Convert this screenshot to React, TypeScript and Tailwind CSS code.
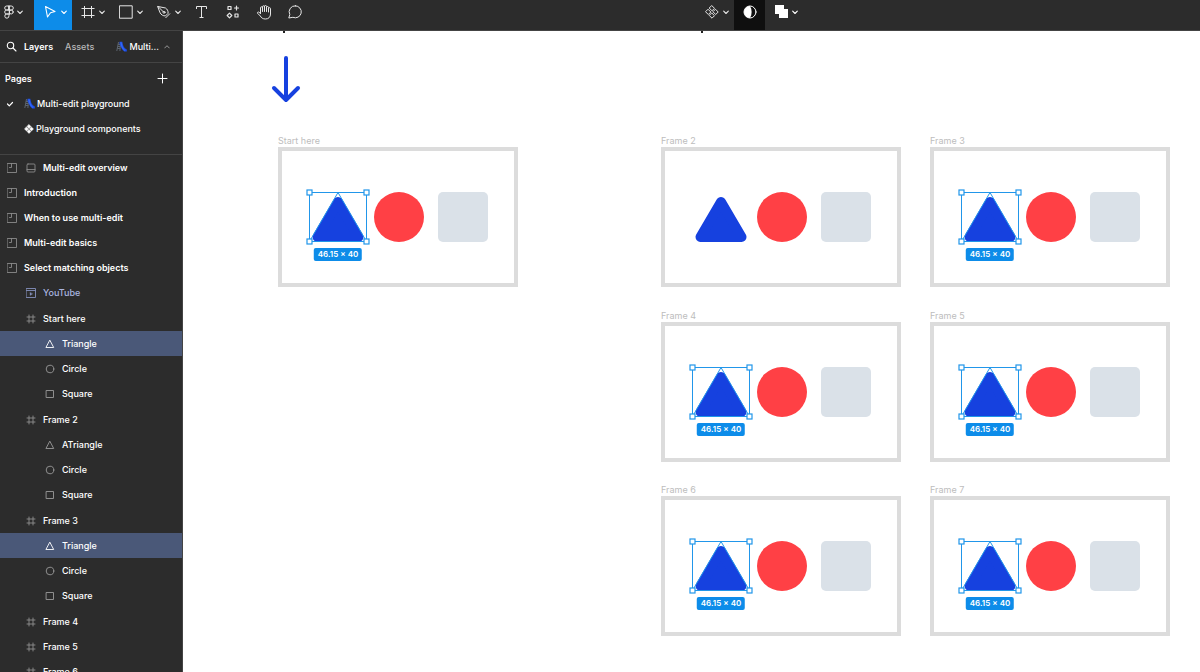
import type { ReactNode } from "react";

type IconProps = { className?: string };

function Icon({ size = 14, className = "", children }: IconProps & { size?: number; children: ReactNode }) {
  return (
    <svg
      width={size}
      height={size}
      viewBox={`0 0 ${size} ${size}`}
      fill="none"
      stroke="currentColor"
      strokeLinecap="round"
      strokeLinejoin="round"
      aria-hidden="true"
      className={`shrink-0 ${className}`}
    >
      {children}
    </svg>
  );
}

function Chevron() {
  return (
    <Icon size={6}>
      <path d="M.7 2.200L3 4.500l2.300-2.300" strokeWidth="1.100" />
    </Icon>
  );
}

function Slide() {
  return (
    <svg width="11" height="11" viewBox="0 0 11 11" fill="none" aria-hidden="true" className="shrink-0">
      <path d="M2.500 1L.8 10M4.500 1l-.6 9M2 3.500h3M1.700 5.500h3M1.300 7.500h3" stroke="#5c646e" strokeWidth="1" />
      <path d="M3.500 .8h2.800c.5 3.700 1.400 6.400 4.500 7.700v2H8.300C5.800 9 5 6 3.500 3z" fill="#1d4fe8" />
      <path d="M5 1.500c.5 3.500 1.600 6.700 4 8" stroke="#5b8cff" strokeWidth=".5" />
    </svg>
  );
}

function SectionIcon() {
  return (
    <Icon size={10} className="text-[#8a8a8a]">
      <path d="M.5.5h9v9h-9zM2.500 4.500h2v-4" strokeWidth=".9" />
    </Icon>
  );
}

function FrameIcon() {
  return (
    <Icon size={10} className="text-[#8f8f8f]">
      <path d="M3 1v8M7 1v8M1 3h8M1 7h8" strokeWidth=".9" />
    </Icon>
  );
}

function ComponentIcon() {
  return (
    <Icon size={10} className="text-[#8a8a8a]">
      <rect x="1" y="1" width="8" height="8" rx="1" strokeWidth=".9" />
      <path d="M1 6.500h8" strokeWidth=".9" />
    </Icon>
  );
}

function VideoIcon() {
  return (
    <Icon size={10} className="text-[#8591bd]">
      <path d="M.5.5h9v9h-9zM.5 2.500h9" strokeWidth=".9" />
      <path d="M4 4.500v3L6.500 6z" fill="currentColor" strokeWidth=".3" />
    </Icon>
  );
}

function ShapeIcon({ shape, active }: { shape: string; active?: boolean }) {
  return (
    <Icon size={10} className={active ? "text-white" : "text-[#9a9a9a]"}>
      {shape === "triangle" && <path d="M5 1.500L8.700 8.500H1.300z" strokeWidth=".9" />}
      {shape === "circle" && <circle cx="5" cy="5" r="3.800" strokeWidth=".9" />}
      {shape === "square" && <path d="M1.500 1.500h7v7h-7z" strokeWidth=".9" />}
    </Icon>
  );
}

const layerGroups = [
  [
    { name: "Multi-edit overview", kind: "overview" },
    { name: "Introduction", kind: "section" },
    { name: "When to use multi-edit", kind: "section" },
    { name: "Multi-edit basics", kind: "section" },
    { name: "Select matching objects", kind: "section" },
    { name: "YouTube", kind: "video" },
  ],
  [
    { name: "Start here", kind: "frame" },
    { name: "Triangle", kind: "triangle", active: true },
    { name: "Circle", kind: "circle" },
    { name: "Square", kind: "square" },
  ],
  [
    { name: "Frame 2", kind: "frame" },
    { name: "ATriangle", kind: "triangle" },
    { name: "Circle", kind: "circle" },
    { name: "Square", kind: "square" },
  ],
  [
    { name: "Frame 3", kind: "frame" },
    { name: "Triangle", kind: "triangle", active: true },
    { name: "Circle", kind: "circle" },
    { name: "Square", kind: "square" },
  ],
  [
    { name: "Frame 4", kind: "frame" },
    { name: "Frame 5", kind: "frame" },
    { name: "Frame 6", kind: "frame" },
  ],
];

const rowStyles: Record<string, string> = {
  overview: "pl-[7px] font-semibold",
  section: "pl-[7px] font-semibold",
  video: "pl-[26px] font-medium text-[#aab6e0]",
  frame: "pl-[26px] font-medium",
  triangle: "pl-[45px] font-medium",
  circle: "pl-[45px] font-medium",
  square: "pl-[45px] font-medium",
};

function LayerRow({ name, kind, active }: { name: string; kind: string; active?: boolean }) {
  return (
    <li>
      <button
        className={`flex h-[25px] w-full items-center gap-[7px] text-left ${rowStyles[kind]} ${active ? "bg-[#4a5878]" : ""}`}
      >
        {kind === "overview" && (
          <span className="flex gap-[9px]">
            <SectionIcon />
            <ComponentIcon />
          </span>
        )}
        {kind === "section" && <SectionIcon />}
        {kind === "video" && <VideoIcon />}
        {kind === "frame" && <FrameIcon />}
        {["triangle", "circle", "square"].includes(kind) && <ShapeIcon shape={kind} active={active} />}
        {name}
      </button>
    </li>
  );
}

function Tool({ label, menu, className = "", children }: { label: string; menu?: boolean; className?: string; children: ReactNode }) {
  return (
    <button
      aria-label={label}
      className={`flex shrink-0 items-center pb-1.5 ${menu ? "w-[38px] gap-1 pl-[9px]" : "w-[31px] justify-center"} ${className}`}
    >
      {children}
      {menu && <Chevron />}
    </button>
  );
}

function Toolbar() {
  return (
    <header className="flex h-[31px] overflow-hidden border-b border-[#444] bg-[#2c2c2c] text-[#e6e6e6]">
      <button aria-label="Main menu" className="flex w-[34px] shrink-0 items-center gap-[1px] pb-1.5 pl-[2px]">
        <Icon>
          <path d="M7 1H4.700a2 2 0 000 4H7zM7 1h2.300a2 2 0 010 4H7zM7 5H4.700a2 2 0 000 4H7zM7 9H4.700A2.100 2.100 0 107 11z" />
          <circle cx="9.200" cy="7" r="2" />
        </Icon>
        <Chevron />
      </button>
      <Tool label="Move" menu className="bg-[#0d8ce9] text-white">
        <Icon>
          <path d="M2.500 1.500l9.500 5-4.500 1.300L4.500 12z" strokeWidth="1.100" />
        </Icon>
      </Tool>
      <Tool label="Frame" menu>
        <Icon>
          <path d="M3.500 1v12M10.500 1v12M.5 3.500h13M.5 10.500h13" strokeLinecap="butt" />
        </Icon>
      </Tool>
      <Tool label="Rectangle" menu>
        <Icon>
          <path d="M.8.8h12.400v12.400H.8z" strokeLinejoin="miter" />
        </Icon>
      </Tool>
      <Tool label="Pen" menu>
        <Icon>
          <path d="M1 1.500l7.500 1.500c1.700 1 2.800 3 2.600 5.300l-2.600 2.600C6.200 11 4 9.800 3.200 8zM1 1.500l5.300 5.300M8.800 12.700l3.900-3.900" />
          <circle cx="7" cy="7.300" r="1" />
        </Icon>
      </Tool>
      <Tool label="Text">
        <Icon>
          <path d="M1.500 4V1.500h10V4M6.500 1.500v11M4.500 12.500h4" strokeLinecap="butt" />
        </Icon>
      </Tool>
      <Tool label="Resources">
        <Icon>
          <path d="M2 1.500h3v3H2zM9 9h3v3H9zM10.500 1v4M8.500 3h4M3.500 8.200l2.300 2.300-2.300 2.300-2.300-2.300z" strokeWidth="1.200" />
        </Icon>
      </Tool>
      <Tool label="Hand">
        <Icon size={16}>
          <path d="M4.500 9.500V3.800a1 1 0 012 0v-1a1 1 0 012 0v-.3a1 1 0 012 0v1a1 1 0 012 0v1.200a1 1 0 012 0V10c0 3-1.900 5-5 5-2.700 0-4.200-1.200-5.200-3L1.500 9.200c-.4-1 .8-1.600 1.500-.9l1.500 1.200M6.500 3.500v4M8.500 2.500v5M10.500 3.500v4M12.500 4.500v3.500" />
        </Icon>
      </Tool>
      <Tool label="Comment">
        <Icon>
          <path d="M7.500 .8a6 6 0 11-2.600 11.500L.8 13l1-3.500A6 6 0 017.500.8z" />
        </Icon>
      </Tool>

      <div className="mr-[397px] ml-auto flex">
        <Tool label="Component" menu>
          <Icon>
            <path d="M7 .8l2.500 2.500L7 5.800 4.500 3.300zM7 8.200l2.500 2.500L7 13.200l-2.500-2.500zM3.300 4.500L5.800 7 3.300 9.500.8 7zM10.700 4.500L13.200 7l-2.500 2.500L8.200 7z" />
          </Icon>
        </Tool>
        <Tool label="Mask" className="bg-[#0f0f0f] text-white">
          <Icon>
            <circle cx="7" cy="7" r="6" />
            <path d="M7 1a6 6 0 000 12c2.200-3.500 2.200-8.500 0-12z" fill="currentColor" stroke="none" />
          </Icon>
        </Tool>
        <Tool label="Boolean groups" menu className="text-white">
          <Icon>
            <path d="M1 0h9v4h4v9H5V9H1z" fill="currentColor" stroke="none" />
          </Icon>
        </Tool>
      </div>
    </header>
  );
}

function Sidebar() {
  return (
    <aside className="flex w-[183px] shrink-0 flex-col overflow-hidden border-r border-[#444] bg-[#2c2c2c] text-[9px] leading-[12px] text-white">
      <div className="flex h-8 shrink-0 items-center border-b border-[#444] pl-[6px]">
        <button aria-label="Search">
          <Icon size={11}>
            <circle cx="4.500" cy="4.500" r="3.200" strokeWidth="1.100" />
            <path d="M7 7l3 3" strokeWidth="1.100" />
          </Icon>
        </button>
        <button className="ml-[7px] font-semibold">Layers</button>
        <button className="ml-3 font-medium text-[#b8b8b8]">Assets</button>
        <button className="mr-3 ml-auto flex items-center gap-[2px] font-medium">
          <Slide />
          Multi...
          <Icon size={6} className="ml-[3px] text-[#999]">
            <path d="M.7 4L3 1.700 5.300 4" />
          </Icon>
        </button>
      </div>

      <div className="flex h-[92px] shrink-0 flex-col border-b border-[#444] pt-[3px]">
        <div className="flex h-[25px] items-center justify-between pr-[14px] pl-[5px]">
          <h2 className="font-semibold">Pages</h2>
          <button aria-label="Add page">
            <Icon size={11}>
              <path d="M5.500 1v9M1 5.500h9" />
            </Icon>
          </button>
        </div>
        <button className="flex h-[25px] items-center pl-[6px] font-medium">
          <Icon size={8} className="mr-[10px]">
            <path d="M1.500 4l1.800 1.800L6.500 2.500" strokeWidth="1.200" />
          </Icon>
          <Slide />
          <span className="ml-[2px]">Multi-edit playground</span>
        </button>
        <button className="flex h-[25px] items-center gap-[2px] pl-[24px] font-medium">
          <Icon size={10}>
            <path
              d="M5 .5l2 2-2 2-2-2zM5 5.500l2 2-2 2-2-2zM2.500 3l2 2-2 2-2-2zM7.500 3l2 2-2 2-2-2z"
              fill="currentColor"
              strokeWidth=".4"
            />
          </Icon>
          Playground components
        </button>
      </div>

      <div className="flex flex-col gap-px">
        {layerGroups.map((group, i) => (
          <ul key={i}>
            {group.map((layer) => (
              <LayerRow key={layer.name} {...layer} />
            ))}
          </ul>
        ))}
      </div>
    </aside>
  );
}

// Where each artboard sits on the canvas
const artboards = [
  { name: "Start here", place: "left-[95px] top-[103px]", selected: true },
  { name: "Frame 2", place: "left-[478px] top-[103px]", selected: false },
  { name: "Frame 3", place: "left-[747px] top-[103px]", selected: true },
  { name: "Frame 4", place: "left-[478px] top-[278px]", selected: true },
  { name: "Frame 5", place: "left-[747px] top-[278px]", selected: true },
  { name: "Frame 6", place: "left-[478px] top-[452px]", selected: true },
  { name: "Frame 7", place: "left-[747px] top-[452px]", selected: true },
];

function Triangle({ selected }: { selected: boolean }) {
  return (
    <div className="relative">
      <svg width="58" height="50" viewBox="0 0 58 50" className="overflow-visible" aria-hidden="true">
        <path d="M29 10L8.500 45h41z" fill="#1641df" stroke="#1641df" strokeWidth="10" strokeLinejoin="round" />
        {selected && (
          <g fill="none" stroke="#2196ea">
            <path d="M29 .5L.5 49.500h57z" />
            <path d="M.5.5h57v49H.5z" />
            <g fill="#fff" strokeWidth="1.200">
              <rect x="-2" y="-2" width="5" height="5" />
              <rect x="55" y="-2" width="5" height="5" />
              <rect x="-2" y="47" width="5" height="5" />
              <rect x="55" y="47" width="5" height="5" />
            </g>
          </g>
        )}
      </svg>
      {selected && (
        <span className="absolute top-[56px] left-1/2 -translate-x-1/2 rounded-xs bg-[#0d8ce9] px-1 text-[8px] leading-[13px] font-semibold whitespace-nowrap text-white">
          46.15 × 40
        </span>
      )}
    </div>
  );
}

function Artboard({ name, place, selected }: { name: string; place: string; selected: boolean }) {
  return (
    <section className={`absolute ${place}`}>
      <h3 className="text-[9px] leading-[13px] text-[#bdbdbd]">{name}</h3>
      <div className="flex h-[140px] w-[240px] items-center border-4 border-[#dcdcdc] bg-white pl-[27px]">
        <Triangle selected={selected} />
        <div className="ml-[7px] size-[50px] rounded-full bg-[#ff4045]" />
        <div className="ml-[14px] size-[50px] rounded-[5px] bg-[#dae1e8]" />
      </div>
    </section>
  );
}

export default function App() {
  return (
    <div className="flex h-screen flex-col overflow-hidden font-['Inter',sans-serif]">
      <Toolbar />
      <div className="flex min-h-0 flex-1">
        <Sidebar />
        <main className="relative flex-1 overflow-hidden bg-white">
          <div className="absolute top-0 left-[100px] h-[2px] w-[2px] bg-[#222]" />
          <div className="absolute top-0 left-[518px] h-[2px] w-[2px] bg-[#222]" />
          <svg
            width="30"
            height="48"
            viewBox="0 0 30 48"
            fill="none"
            stroke="#1641df"
            strokeWidth="4"
            strokeLinecap="round"
            strokeLinejoin="round"
            aria-hidden="true"
            className="absolute top-[24px] left-[88px]"
          >
            <path d="M15 3v42M3 33l12 12 12-12" />
          </svg>
          {artboards.map((board) => (
            <Artboard key={board.name} {...board} />
          ))}
        </main>
      </div>
    </div>
  );
}
